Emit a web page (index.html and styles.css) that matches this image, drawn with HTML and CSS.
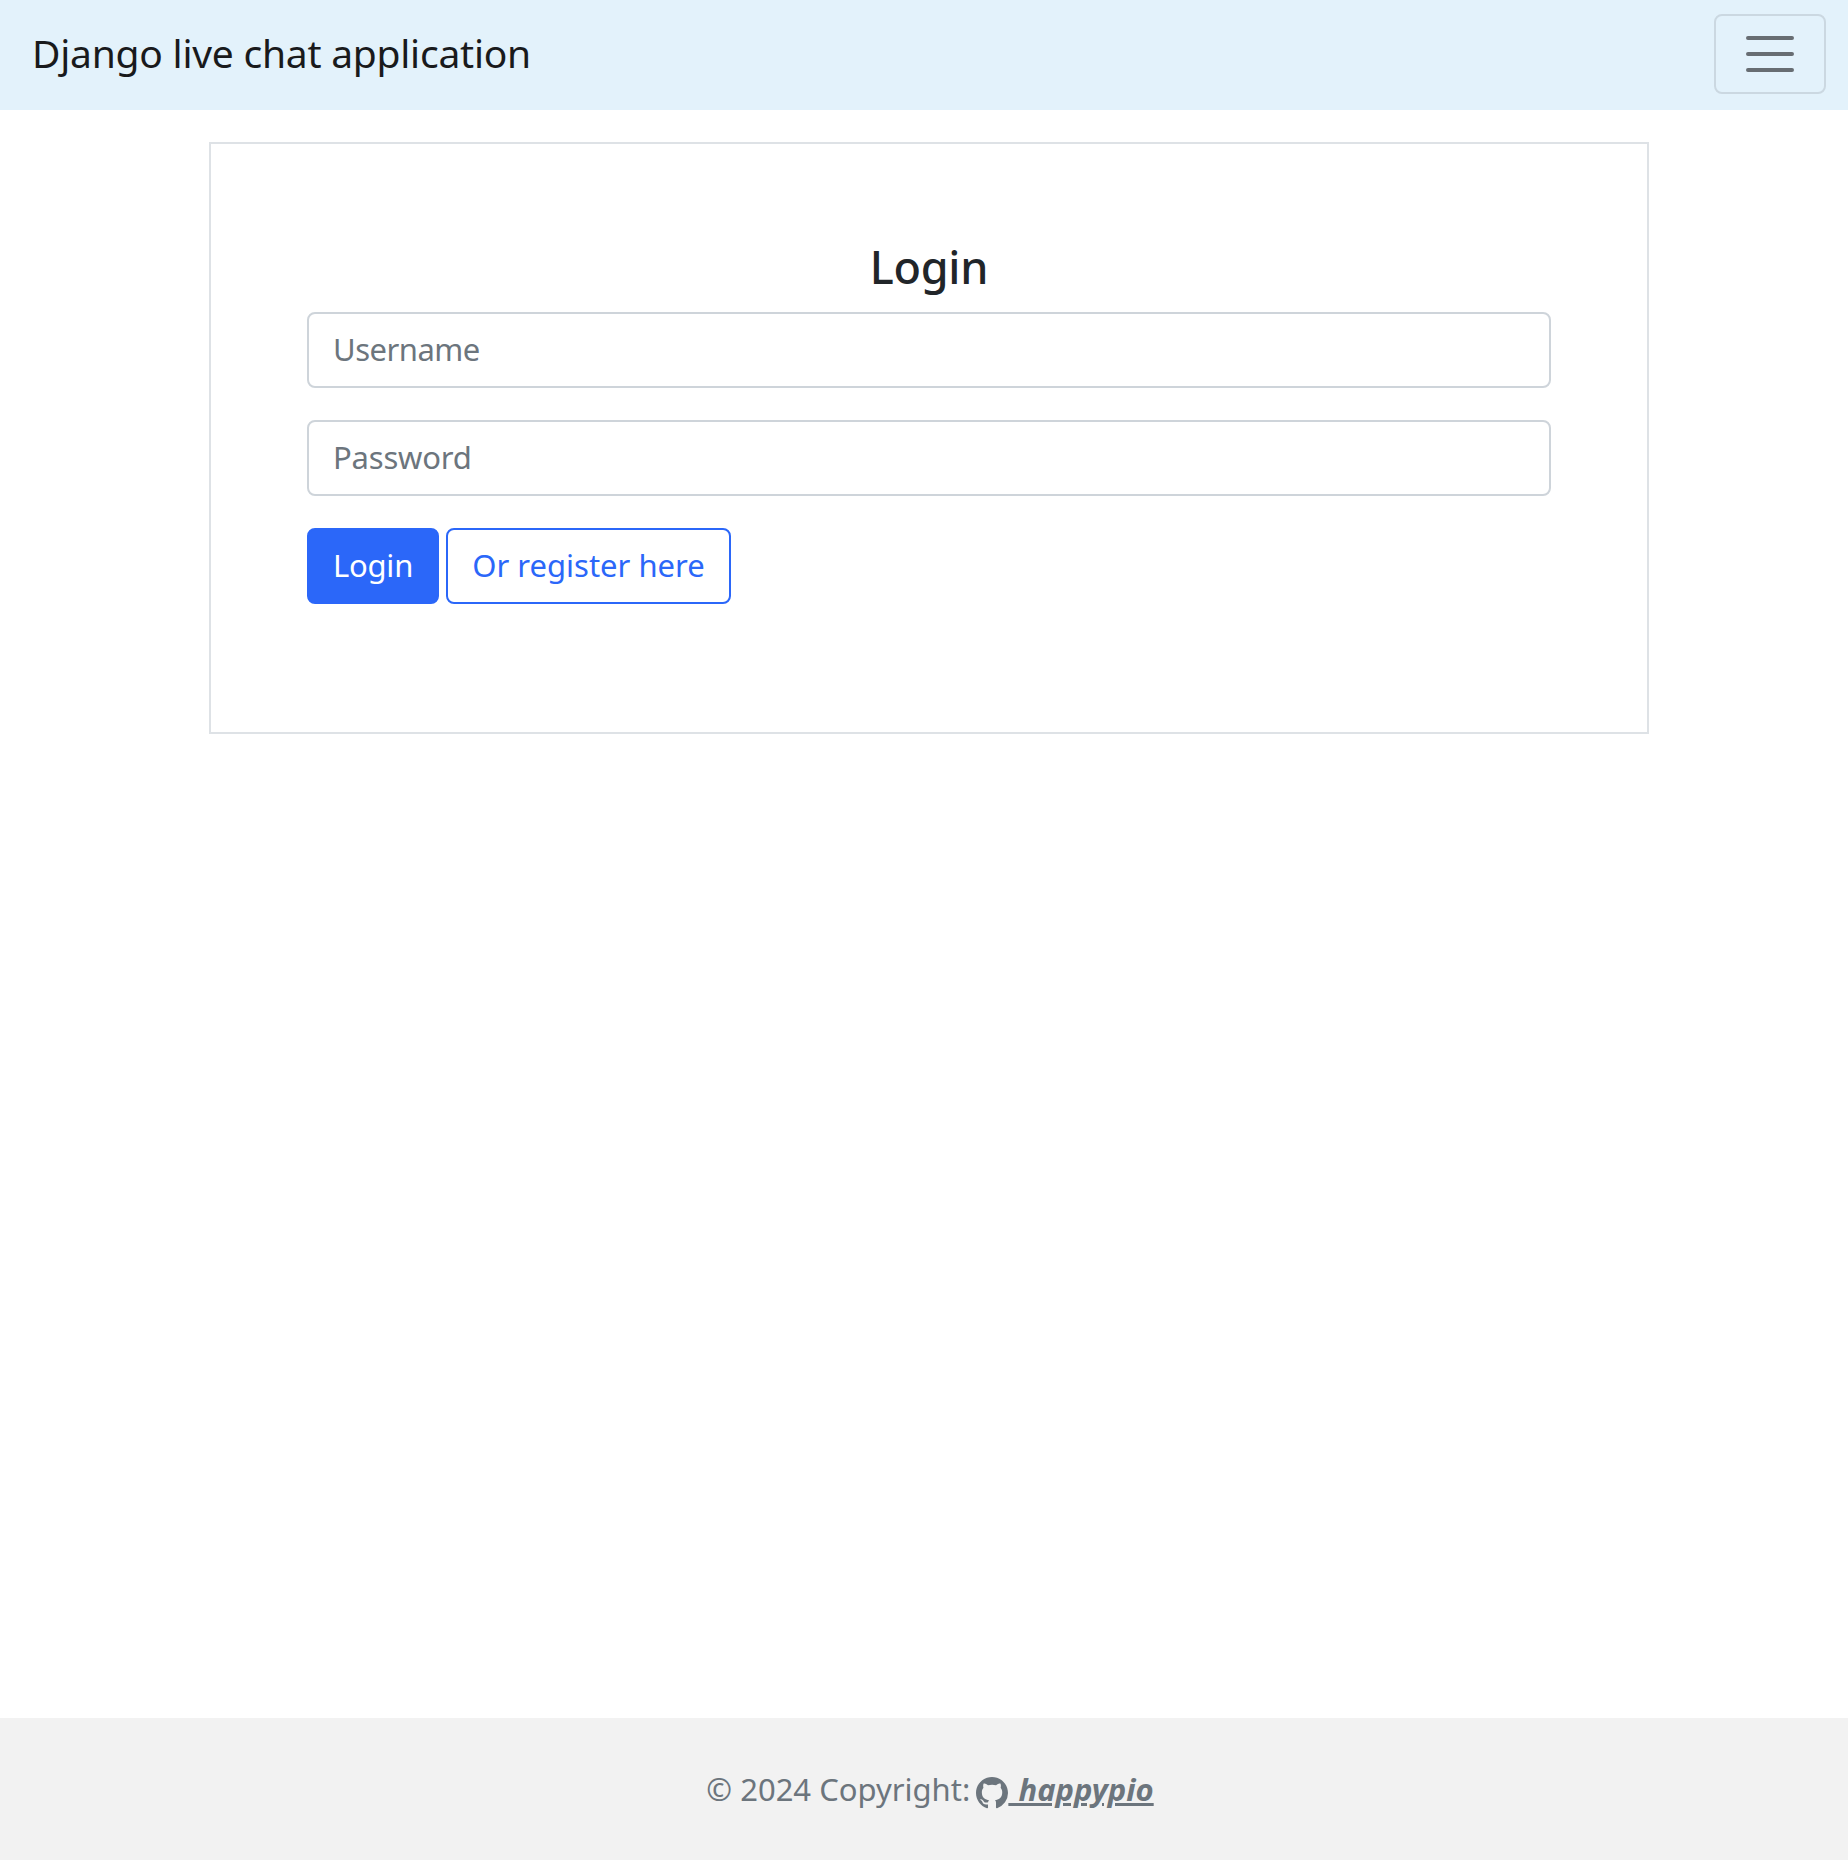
FILE: index.html
```
<!DOCTYPE html>
<html lang="en">
<head>
  <meta charset="utf-8">
  <title>Django live chat application</title>
  <link rel="stylesheet" href="styles.css">
</head>
<body>
  <nav class="navbar">
    <a class="navbar-brand" href="#">Django live chat application</a>
    <button class="navbar-toggler" type="button" aria-label="Toggle navigation">
      <svg class="toggler-icon" viewBox="0 0 30 30"><path d="M4 7h22M4 15h22M4 23h22" fill="none" stroke="currentColor" stroke-width="2" stroke-linecap="round"/></svg>
    </button>
  </nav>
  <main class="content">
    <form class="login-card">
      <h2 class="login-title">Login</h2>
      <input class="form-control username" type="text" placeholder="Username">
      <input class="form-control password" type="password" placeholder="Password">
      <div class="actions">
        <button class="btn btn-primary" type="button">Login</button>
        <a class="btn btn-outline" href="#">Or register here</a>
      </div>
    </form>
  </main>
  <footer class="footer">
    <p class="copyright">© 2024 Copyright: <a class="author" href="#"><svg class="github-icon" viewBox="0 0 16 16" fill="currentColor"><path d="M8 0C3.58 0 0 3.58 0 8c0 3.54 2.29 6.53 5.47 7.59.4.07.55-.17.55-.38 0-.19-.01-.82-.01-1.49-2.01.37-2.53-.49-2.69-.94-.09-.23-.48-.94-.82-1.13-.28-.15-.68-.52-.01-.53.63-.01 1.08.58 1.23.82.72 1.21 1.87.87 2.33.66.07-.52.28-.87.51-1.07-1.78-.2-3.64-.89-3.64-3.95 0-.87.31-1.59.82-2.15-.08-.2-.36-1.02.08-2.12 0 0 .67-.21 2.2.82.64-.18 1.32-.27 2-.27s1.36.09 2 .27c1.53-1.04 2.2-.82 2.2-.82.44 1.1.16 1.92.08 2.12.51.56.82 1.27.82 2.15 0 3.07-1.87 3.75-3.65 3.95.29.25.54.73.54 1.48 0 1.07-.01 1.93-.01 2.2 0 .21.15.46.55.38A8.01 8.01 0 0 0 16 8c0-4.42-3.58-8-8-8"/></svg> happypio</a></p>
  </footer>
</body>
</html>
```
FILE: styles.css
```
* {
  box-sizing: border-box;
}

body {
  margin: 0;
  min-height: 100vh;
  display: flex;
  flex-direction: column;
  background: #fff;
  color: #212529;
  font-family: "Noto Sans", sans-serif;
  font-size: 31px;
  line-height: 48px;
}

.navbar {
  display: flex;
  align-items: center;
  justify-content: space-between;
  height: 110px;
  padding: 14px 22px 16px 32px;
  background: #e3f2fb;
}

.navbar-brand {
  padding-bottom: 3px;
  color: #191a1c;
  font-size: 39px;
  letter-spacing: -0.24px;
  text-decoration: none;
}

.navbar-toggler {
  display: flex;
  align-items: center;
  justify-content: center;
  width: 112px;
  height: 80px;
  padding: 0;
  border: 2px solid #cbd8e1;
  border-radius: 8px;
  background: transparent;
  color: #676d72;
}

.toggler-icon {
  width: 60px;
  height: 60px;
}

.content {
  flex: 1;
  padding: 32px 199px 0 209px;
}

.login-card {
  display: flex;
  flex-direction: column;
  height: 592px;
  padding: 96px;
  border: 2px solid #dee2e6;
}

.login-title {
  margin: 0 0 18px;
  font-size: 45px;
  font-weight: 500;
  line-height: 54px;
  letter-spacing: -0.3px;
  text-align: center;
}

.form-control {
  width: 100%;
  height: 76px;
  margin: 0 0 32px;
  padding: 11px 24px 13px;
  border: 2px solid #ced4da;
  border-radius: 8px;
  background: #fff;
  color: #212529;
  font: inherit;
}

.form-control::placeholder {
  color: #6c757d;
  opacity: 1;
}

.username {
  letter-spacing: -0.5px;
}

.password {
  letter-spacing: -0.2px;
}

.actions {
  display: flex;
  gap: 7px;
}

.btn {
  height: 76px;
  padding: 11px 0 13px;
  border: 2px solid #2b67f9;
  border-radius: 8px;
  font: inherit;
  text-align: center;
  text-decoration: none;
}

.btn-primary {
  width: 132px;
  background: #2b67f9;
  color: #fff;
  letter-spacing: -0.2px;
}

.btn-outline {
  width: 285px;
  color: #2b67f9;
}

.footer {
  height: 142px;
  padding: 47px 0 47px 12px;
  background: #f2f2f2;
  color: #6c757d;
  text-align: center;
}

.copyright {
  margin: 0;
}

.author {
  margin-left: -2px;
  color: inherit;
  font-style: italic;
  font-weight: 700;
  word-spacing: 2px;
  text-decoration: underline;
  text-decoration-thickness: 3px;
  text-underline-offset: 2px;
}

.github-icon {
  width: 32px;
  height: 32px;
  vertical-align: -8px;
}
```
